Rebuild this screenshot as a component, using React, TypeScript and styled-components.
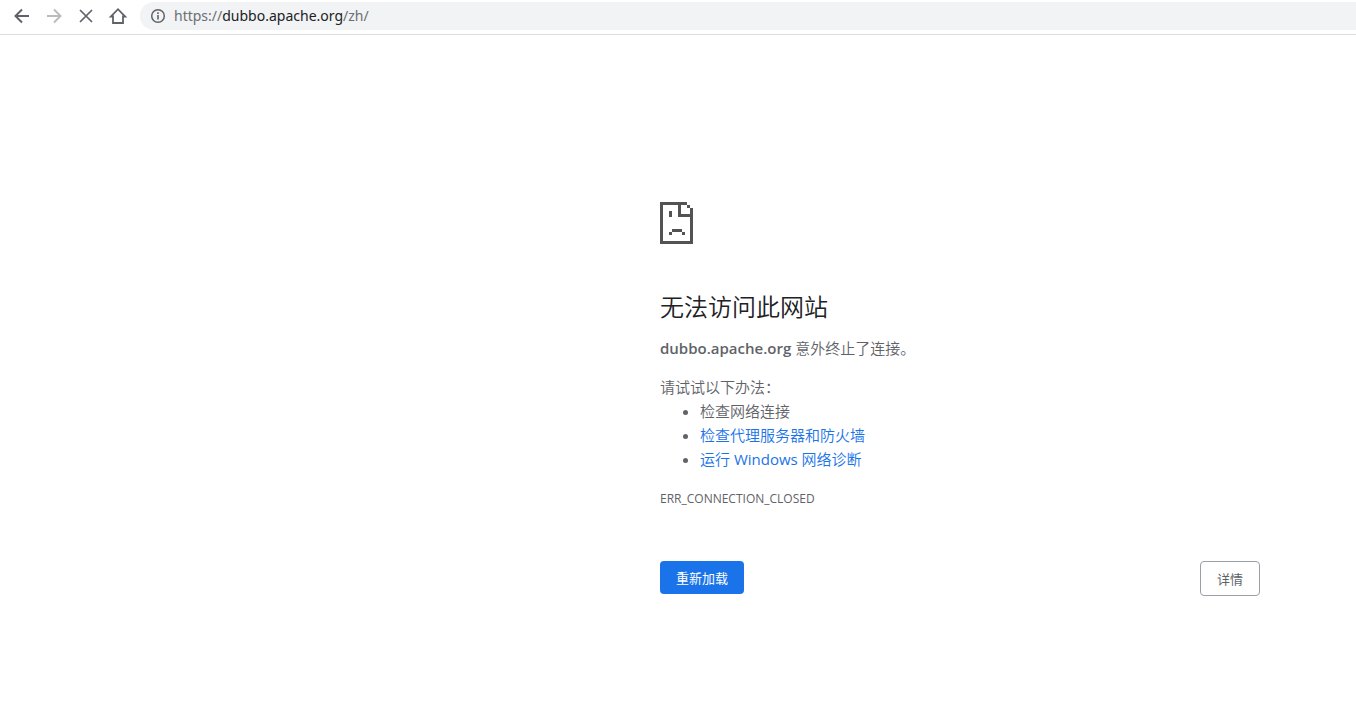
import React from 'react';
import styled, { createGlobalStyle } from 'styled-components';

const Global = createGlobalStyle`
  * { box-sizing: border-box; }
  body {
    margin: 0;
    background: #fff;
    color: #5f6368;
    font-family: "Open Sans", "Noto Sans CJK SC", sans-serif;
    font-size: 15px;
    line-height: 24px;
  }
`;

const Toolbar = styled.header`
  display: flex;
  align-items: center;
  height: 35px;
  padding: 0 0 3px 12px;
  gap: 12px;
  border-bottom: 1px solid #dadce0;
`;

const NavButton = styled.button<{ $muted?: boolean }>`
  display: flex;
  width: 20px;
  height: 20px;
  padding: 0;
  border: 0;
  background: none;
  color: ${(p) => (p.$muted ? '#babcbe' : '#5f6368')};
`;

const AddressBar = styled.div`
  display: flex;
  flex: 1;
  align-items: center;
  gap: 8px;
  height: 28px;
  padding-left: 10px;
  border-radius: 14px 0 0 14px;
  background: #f1f3f4;
`;

const Address = styled.div`
  font-family: "Noto Sans", sans-serif;
  font-size: 14px;
  line-height: 20px;
  color: #6b6f73;
`;

const Host = styled.span`
  color: #202124;
`;

const Page = styled.main`
  display: flex;
  justify-content: flex-end;
  padding: 167px 96px 40px;
`;

const Content = styled.div`
  width: 100%;
  max-width: 600px;
  font-weight: 350;
`;

const SadPage = styled.svg`
  display: block;
  width: 33px;
  height: 42px;
  margin-bottom: 48px;
`;

const Title = styled.h1`
  margin: 0 0 14px;
  font-size: 24px;
  line-height: 30px;
  font-weight: 350;
  color: #202124;
`;

const Text = styled.p`
  margin: 0 0 15px;
`;

const HostName = styled.strong`
  font-weight: 600;
`;

const Intro = styled.p`
  margin: 0;
`;

const Tips = styled.ul`
  margin: 0 0 16px;
  padding-left: 40px;
`;

const TipLink = styled.a`
  color: #1a73e8;
  text-decoration: none;
`;

const Latin = styled.span`
  font-weight: 400;
`;

const ErrorCode = styled.p`
  margin: 0;
  font-size: 12px;
  font-weight: 400;
`;

const Actions = styled.div`
  display: flex;
  align-items: flex-start;
  justify-content: space-between;
  margin-top: 50px;
`;

const Button = styled.button<{ $primary?: boolean }>`
  height: ${(p) => (p.$primary ? 33 : 35)}px;
  padding: 0 16px;
  border: ${(p) => (p.$primary ? '0' : '1px solid #9aa0a6')};
  border-radius: 4px;
  background: ${(p) => (p.$primary ? '#1a73e8' : '#fff')};
  color: ${(p) => (p.$primary ? '#fff' : '#5f6368')};
  font-family: inherit;
  font-size: 13px;
  line-height: 20px;
`;

const Icon = ({ d, weight = 2 }: { d: string; weight?: number }) => (
  <svg width="20" height="20" viewBox="0 0 20 20" fill="none" stroke="currentColor" strokeWidth={weight} aria-hidden="true">
    <path d={d} />
  </svg>
);

export default function App() {
  return (
    <>
      <Global />
      <Toolbar>
        <NavButton aria-label="后退"><Icon d="M17 10H4M10 3.5L3.5 10L10 16.5" /></NavButton>
        <NavButton aria-label="前进" $muted><Icon d="M3 10H16M10 3.5L16.5 10L10 16.5" /></NavButton>
        <NavButton aria-label="停止"><Icon d="M4 4L16 16M16 4L4 16" weight={1.7} /></NavButton>
        <NavButton aria-label="主页"><Icon d="M2.8 10.5H5V17H15V10.5H17.2L10 3.2Z" weight={1.8} /></NavButton>
        <AddressBar>
          <svg width="16" height="16" viewBox="0 0 16 16" fill="none" stroke="#5f6368" aria-hidden="true">
            <circle cx="8" cy="8" r="6.3" strokeWidth="1.5" />
            <path d="M8 7V11.5M8 4.3V6" strokeWidth="1.6" />
          </svg>
          <Address>https://<Host>dubbo.apache.org</Host>/zh/</Address>
        </AddressBar>
      </Toolbar>
      <Page>
        <Content>
          <SadPage viewBox="0 0 33 42" fill="#535353" shapeRendering="crispEdges" aria-hidden="true">
            <path d="M0 0H27V3H21V12H30V6H33V42H0ZM3 3V39H30V15H18V3Z" fillRule="evenodd" />
            <path d="M27 3h3v3H27zM9 9h3v6H9zM12 27h10v3H12zM9 30h3v3H9zM22 30h3v3H22z" />
          </SadPage>
          <Title>无法访问此网站</Title>
          <Text><HostName>dubbo.apache.org</HostName> 意外终止了连接。</Text>
          <Intro>请试试以下办法：</Intro>
          <Tips>
            <li>检查网络连接</li>
            <li><TipLink href="#proxy">检查代理服务器和防火墙</TipLink></li>
            <li><TipLink href="#diagnose">运行 <Latin>Windows</Latin> 网络诊断</TipLink></li>
          </Tips>
          <ErrorCode>ERR_CONNECTION_CLOSED</ErrorCode>
          <Actions>
            <Button $primary>重新加载</Button>
            <Button>详情</Button>
          </Actions>
        </Content>
      </Page>
    </>
  );
}
